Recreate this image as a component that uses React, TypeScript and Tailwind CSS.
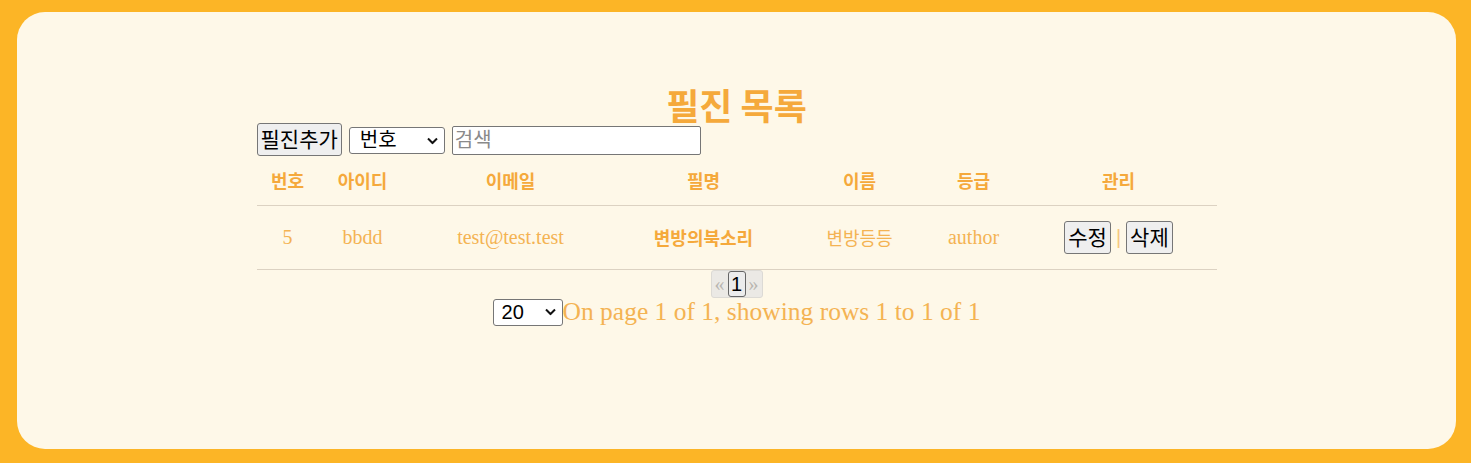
import React from 'react';

const sans = "font-['Liberation_Sans','Noto_Sans_CJK_KR',sans-serif]";
const kr = "font-['Noto_Sans_CJK_KR','Noto_Sans',sans-serif]";
const serif = "font-['Liberation_Serif','Noto_Sans_CJK_KR',serif]";

interface Writer {
  id: number;
  userId: string;
  email: string;
  penName: string;
  name: string;
  grade: string;
}

const writers: Writer[] = [
  { id: 5, userId: 'bbdd', email: 'test@test.test', penName: '변방의북소리', name: '변방등등', grade: 'author' },
];

const columns = [
  { label: '번호', w: 'w-[62px]' },
  { label: '아이디', w: 'w-[88px]' },
  { label: '이메일', w: 'w-[208px]' },
  { label: '필명', w: 'w-[178px]' },
  { label: '이름', w: 'w-[134px]' },
  { label: '등급', w: 'w-[94px]' },
  { label: '관리', w: 'w-[196px]' },
];

const NativeButton: React.FC<{ children: React.ReactNode }> = ({ children }) => (
  <button
    className={`${sans} h-[33px] rounded-[3px] border border-[#767676] bg-[#efefef] px-[3px] text-[21px] leading-[31px] text-black`}
  >
    {children}
  </button>
);

const Chevron: React.FC = () => (
  <svg className="pointer-events-none absolute right-[7px] top-1/2 -translate-y-1/2" width="11" height="7" viewBox="0 0 11 7">
    <path d="M1 1l4.5 4.5L10 1" fill="none" stroke="#111" strokeWidth="2" />
  </svg>
);

const Select: React.FC<{ w: string; options: string[]; value: string; pl: string }> = ({ w, options, value, pl }) => (
  <span className={`relative inline-block ${w}`}>
    <select
      className={`${sans} ${pl} h-[27px] w-full appearance-none rounded-[3px] border border-[#767676] bg-white text-[20px] leading-[25px] text-black`}
      defaultValue={value}
    >
      {options.map((o) => (
        <option key={o} value={o}>
          {o}
        </option>
      ))}
    </select>
    <Chevron />
  </span>
);

const App: React.FC = () => {
  return (
    <div className="h-screen w-full bg-[#fcb526] pb-[14px] pl-[17px] pr-[15px] pt-[12px]">
      <div className="h-full rounded-[28px] bg-[#fef8e8] pt-[73px]">
        <div className="mx-auto w-[960px]">
          <h1 className={`${kr} text-center text-[36px] font-bold leading-[38px] text-[#f5a93b]`}>필진 목록</h1>

          <div className="flex items-baseline gap-[7px]">
            <NativeButton>필진추가</NativeButton>
            <Select w="w-[96px]" options={['번호', '아이디', '이메일']} value="번호" pl="pl-[10px]" />
            <input
              className={`${sans} h-[29px] w-[249px] rounded-[2px] border border-[#767676] bg-white px-[2px] text-[20px] text-black placeholder:text-[#8a8a8a]`}
              placeholder="검색"
            />
          </div>

          <table className="mt-px w-full table-fixed border-collapse">
            <thead>
              <tr className="border-b border-[#dcd2c2]">
                {columns.map((c) => (
                  <th key={c.label} className={`${kr} ${c.w} h-[48px] text-center text-[18px] font-bold text-[#f5a93b]`}>
                    {c.label}
                  </th>
                ))}
              </tr>
            </thead>
            <tbody>
              {writers.map((w) => (
                <tr key={w.id} className="border-b border-[#dcd2c2]">
                  <td className={`${serif} h-[64px] text-center text-[20px] text-[#f4b353]`}>{w.id}</td>
                  <td className={`${serif} text-center text-[20px] text-[#f4b353]`}>{w.userId}</td>
                  <td className={`${serif} text-center text-[20px] text-[#f4b353]`}>{w.email}</td>
                  <td className={`${kr} text-center text-[18px] font-bold text-[#f5a93b]`}>{w.penName}</td>
                  <td className={`${kr} text-center text-[18px] text-[#f4b353]`}>{w.name}</td>
                  <td className={`${serif} text-center text-[20px] text-[#f4b353]`}>{w.grade}</td>
                  <td className="text-center">
                    <div className="flex items-center justify-center gap-[5px]">
                      <NativeButton>수정</NativeButton>
                      <span className={`${sans} text-[20px] text-[#f6c87f]`}>|</span>
                      <NativeButton>삭제</NativeButton>
                    </div>
                  </td>
                </tr>
              ))}
            </tbody>
          </table>

          <div className="flex justify-center">
            <div className="flex h-[28px] items-stretch rounded-[3px] border border-[#dcdad5] bg-[#ebe9e5]">
              <span className={`${serif} flex w-[16px] items-center justify-center text-[20px] text-[#b8b5b0]`}>«</span>
              <span className={`${sans} flex w-[18px] items-center justify-center rounded-[3px] border border-[#666] bg-[#ececec] text-[20px] text-black`}>1</span>
              <span className={`${serif} flex w-[16px] items-center justify-center text-[20px] text-[#b8b5b0]`}>»</span>
            </div>
          </div>

          <div className="flex items-end justify-center">
            <Select w="w-[70px]" options={['10', '20', '50']} value="20" pl="pl-[8px]" />
            <span className={`${serif} text-[25.5px] leading-[28px] text-[#f4b353]`}>
              On page 1 of 1, showing rows 1 to 1 of 1
            </span>
          </div>
        </div>
      </div>
    </div>
  );
};

export default App;
